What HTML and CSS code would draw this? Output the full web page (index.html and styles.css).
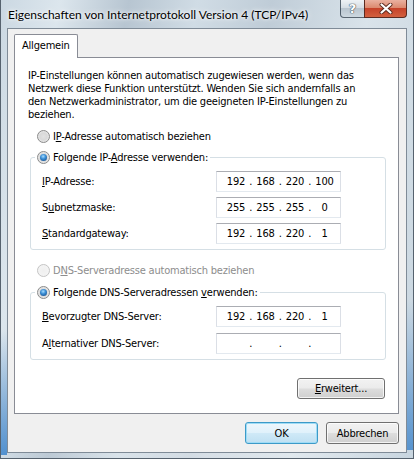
FILE: index.html
```html
<!DOCTYPE html>
<html lang="de">
<head>
<meta charset="utf-8">
<title>Eigenschaften von Internetprotokoll Version 4 (TCP/IPv4)</title>
<link rel="stylesheet" href="styles.css">
</head>
<body>
<div class="window">
  <div class="titlebar">
    <span class="title">Eigenschaften von Internetprotokoll Version 4 (TCP/IPv4)</span>
    <div class="caption-buttons">
      <span class="cap-btn help">?</span>
      <span class="cap-btn close">
        <svg width="14" height="11" viewBox="0 0 14 11">
          <path d="M2.5 1.5 L11.5 9.5 M11.5 1.5 L2.5 9.5" stroke="#5a2a1e" stroke-width="4" stroke-linecap="round"/>
          <path d="M2.5 1.5 L11.5 9.5 M11.5 1.5 L2.5 9.5" stroke="#ffffff" stroke-width="2.2" stroke-linecap="round"/>
        </svg>
      </span>
    </div>
  </div>
  <div class="client">
    <div class="tabs">
      <div class="tab">Allgemein</div>
    </div>
    <div class="panel">
      <p class="desc">IP-Einstellungen können automatisch zugewiesen werden, wenn das<br>Netzwerk diese Funktion unterstützt. Wenden Sie sich andernfalls an<br>den Netzwerkadministrator, um die geeigneten IP-Einstellungen zu<br>beziehen.</p>

      <div class="radio radio-first"><span class="rb"></span><span>I<u>P</u>-Adresse automatisch beziehen</span></div>

      <fieldset class="group group-ip">
        <legend class="radio"><span class="rb on"></span><span>Folgende IP-<u>A</u>dresse verwenden:</span></legend>
        <div class="field-row">
          <span class="lbl"><u>I</u>P-Adresse:</span>
          <div class="ip"><span class="oct">192</span><span class="dot">.</span><span class="oct">168</span><span class="dot">.</span><span class="oct">220</span><span class="dot">.</span><span class="oct">100</span></div>
        </div>
        <div class="field-row">
          <span class="lbl">S<u>u</u>bnetzmaske:</span>
          <div class="ip"><span class="oct">255</span><span class="dot">.</span><span class="oct">255</span><span class="dot">.</span><span class="oct">255</span><span class="dot">.</span><span class="oct">0</span></div>
        </div>
        <div class="field-row">
          <span class="lbl"><u>S</u>tandardgateway:</span>
          <div class="ip"><span class="oct">192</span><span class="dot">.</span><span class="oct">168</span><span class="dot">.</span><span class="oct">220</span><span class="dot">.</span><span class="oct">1</span></div>
        </div>
      </fieldset>

      <div class="radio radio-dns disabled"><span class="rb"></span><span>D<u>N</u>S-Serveradresse automatisch beziehen</span></div>

      <fieldset class="group group-dns">
        <legend class="radio"><span class="rb on"></span><span>Folgende DNS-Serveradressen <u>v</u>erwenden:</span></legend>
        <div class="field-row">
          <span class="lbl"><u>B</u>evorzugter DNS-Server:</span>
          <div class="ip"><span class="oct">192</span><span class="dot">.</span><span class="oct">168</span><span class="dot">.</span><span class="oct">220</span><span class="dot">.</span><span class="oct">1</span></div>
        </div>
        <div class="field-row">
          <span class="lbl">A<u>l</u>ternativer DNS-Server:</span>
          <div class="ip"><span class="oct"></span><span class="dot">.</span><span class="oct"></span><span class="dot">.</span><span class="oct"></span><span class="dot">.</span><span class="oct"></span></div>
        </div>
      </fieldset>

      <button class="btn btn-adv" type="button"><span><u>E</u>rweitert...</span></button>
    </div>
    <div class="dialog-buttons">
      <button class="btn btn-default" type="button">OK</button>
      <button class="btn" type="button">Abbrechen</button>
    </div>
  </div>
</div>
</body>
</html>
```
FILE: styles.css
```css
* { box-sizing: border-box; }
html, body { margin: 0; padding: 0; }
body {
  width: 414px;
  height: 459px;
  overflow: hidden;
  font-family: "DejaVu Sans Condensed", "Liberation Sans", sans-serif;
  font-stretch: condensed;
  font-size: 11px;
  letter-spacing: -0.2px;
  color: #000;
}
u { text-decoration: underline; text-underline-offset: 1px; }

.window {
  width: 414px;
  height: 459px;
  display: flex;
  flex-direction: column;
  padding: 0 6px 5px 6px;
  border: 1px solid #56626e;
  border-top: none;
  background:
    linear-gradient(to top, rgba(40,120,200,0.75), rgba(40,120,200,0)) 0 330px / 6px 125px no-repeat,
    linear-gradient(to top, rgba(40,120,200,0.7), rgba(40,120,200,0)) 406px 300px / 6px 150px no-repeat,
    linear-gradient(to right, rgba(255,255,255,0), rgba(255,255,255,0.35) 50%, rgba(255,255,255,0)) 0 448px / 412px 10px no-repeat,
    linear-gradient(100deg, #cbd8e2 0%, #dce6ed 12%, #b7c5d1 26%, #d0dce5 40%, #bfccd7 55%, #d9e3ea 75%, #c8d5df 100%);
}

.titlebar {
  height: 28px;
  flex: none;
  display: flex;
  align-items: flex-start;
  justify-content: space-between;
  padding-left: 1px;
}
.title {
  font-family: Lato, "Liberation Sans", sans-serif;
  font-stretch: normal;
  font-size: 12px;
  letter-spacing: 0;
  padding-top: 6px;
  line-height: 18px;
  white-space: nowrap;
  text-shadow: 0 0 6px #fff, 0 0 3px #fff;
}
.caption-buttons {
  display: flex;
  height: 18px;
}
.cap-btn {
  height: 18px;
  display: flex;
  align-items: center;
  justify-content: center;
  border: 1px solid rgba(40,55,70,0.75);
  border-top: none;
}
.help {
  width: 24px;
  border-right: none;
  border-radius: 0 0 0 4px;
  background: linear-gradient(#eef2f5 0%, #d6dee5 45%, #b9c5cf 50%, #cdd8e0 100%);
  font-family: "DejaVu Sans", sans-serif;
  font-stretch: normal;
  font-weight: bold;
  font-size: 13px;
  letter-spacing: 0;
  color: #fff;
  text-shadow: 0 0 1px #44525e, 0 0 1px #44525e, 0 0 1px #44525e;
}
.close {
  width: 43px;
  border-radius: 0 0 4px 0;
  border-color: #5b2a20;
  background: linear-gradient(#eab1a0 0%, #dc8a70 45%, #c6432a 50%, #d2603f 100%);
}

.client {
  flex: 1;
  display: flex;
  flex-direction: column;
  background: #f0f0f0;
  border: 1px solid #7f8b97;
  padding: 5px 7px 8px 6px;
}

.tabs {
  display: flex;
  height: 24px;
  margin-bottom: -1px;
  flex: none;
}
.tab {
  z-index: 1;
  height: 24px;
  padding: 0 7px;
  line-height: 22px;
  background: #fff;
  border: 1px solid #898c95;
  border-bottom: none;
  border-radius: 2px 2px 0 0;
}

.panel {
  display: flex;
  flex-direction: column;
  background: #fff;
  border: 1px solid #898c95;
  padding: 11px 0 14px 13px;
}
.desc {
  margin: 0;
  line-height: 13px;
  white-space: nowrap;
}

.radio {
  display: flex;
  align-items: center;
  gap: 3px;
  height: 20px;
  white-space: nowrap;
}
.radio-first { margin-top: 5px; padding-left: 9px; }
.radio-dns { margin-top: 10px; padding-left: 9px; }
.radio.disabled { color: #8d8d8d; }

.rb {
  flex: none;
  width: 13px;
  height: 13px;
  border-radius: 50%;
  border: 1px solid #8a8a8a;
  background: radial-gradient(circle at 50% 50%, #e2e2e2 0, #d9d9d9 45%, #f7f7f7 100%);
  display: flex;
  align-items: center;
  justify-content: center;
}
.disabled .rb {
  border-color: #c4c4c4;
  background: radial-gradient(circle at 50% 50%, #efefef 0, #f6f6f6 100%);
}
.rb.on::after {
  content: "";
  width: 7px;
  height: 7px;
  border-radius: 50%;
  background: radial-gradient(circle at 45% 35%, #a6dcff 0, #3b8fd6 40%, #0d3f7c 100%);
}

.group {
  margin: 3px 12px 0 2px;
  padding: 0 0 5px 11px;
  border: 1px solid #d5dfe5;
  border-radius: 3px;
  min-width: 0;
}
.group-dns { margin-top: 4px; }
.group legend {
  margin-left: -7px;
  padding: 0 2px 0 2px;
  height: 16px;
}
.field-row {
  display: grid;
  grid-template-columns: 174px 125px;
  align-items: center;
  height: 21px;
  margin-top: 5px;
}
.group-ip .field-row:first-of-type,
.group-dns .field-row:first-of-type { margin-top: 6px; }
.group-dns .field-row { margin-top: 6px; }

.ip {
  height: 21px;
  display: flex;
  align-items: center;
  padding-left: 9px;
  background: #fff;
  border: 1px solid #dbdfe6;
  border-top-color: #abadb3;
  border-bottom-color: #e3e9ef;
}
.oct { width: 20px; text-align: center; }
.dot { width: 9.5px; text-align: center; }

.btn {
  font-family: inherit;
  font-stretch: inherit;
  font-size: 11px;
  letter-spacing: inherit;
  color: #000;
  height: 22px;
  padding: 0;
  border: 1px solid #707070;
  border-radius: 3px;
  background: linear-gradient(#f2f2f2 0%, #ebebeb 48%, #dddddd 52%, #cfcfcf 100%);
  box-shadow: inset 0 0 0 1px rgba(255,255,255,0.75);
  display: flex;
  align-items: center;
  justify-content: center;
}
.btn-adv {
  align-self: flex-end;
  width: 88px;
  height: 21px;
  margin-top: 18px;
  margin-right: 13px;
}
.dialog-buttons {
  display: flex;
  justify-content: flex-end;
  gap: 8px;
  margin-top: 8px;
}
.dialog-buttons .btn { width: 73px; }
.btn-default {
  border-color: #3c9ac8;
  background: linear-gradient(#eef7fc 0%, #e0f1fb 48%, #cfe9f7 52%, #bfe0f2 100%);
  box-shadow: inset 0 0 0 1px #9fdcf6;
}
```
